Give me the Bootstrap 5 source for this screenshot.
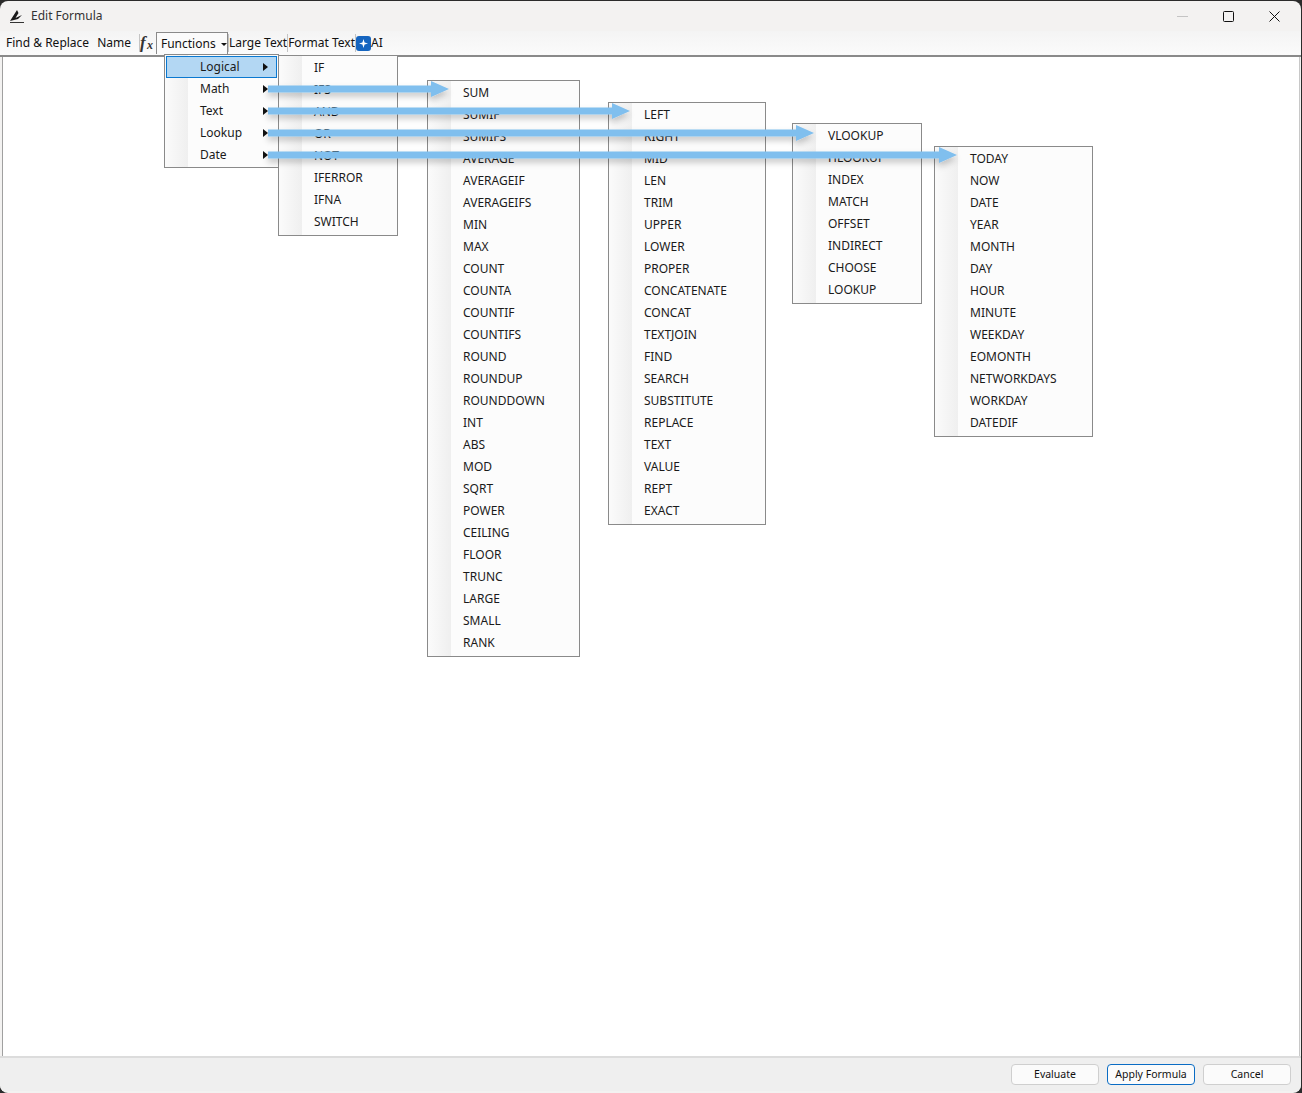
<!DOCTYPE html>
<html lang="en">
<head>
<meta charset="UTF-8">
<title>Edit Formula</title>
<link href="https://cdn.jsdelivr.net/npm/bootstrap@5.3.3/dist/css/bootstrap.min.css" rel="stylesheet">
<style>
  html, body { height: 100%; }
  body { background: #2b2b2b; font-family: "Noto Sans", "Open Sans", sans-serif; font-size: 12px; color: #111; overflow: hidden; }
  .app-window { position: relative; height: 1092px; margin: 1px 1px 0 0; background: #f3f2f1; border-radius: 8px 8px 8px 8px; overflow: hidden; }
  .title-bar { height: 30px; padding-left: 9px; }
  .title-text { margin-left: 6px; color: #333; font-size: 12px; }
  .win-btn { width: 46px; height: 30px; }
  .tool-bar { height: 26px; padding-left: 6px; background: linear-gradient(#f4f4f4, #fbfbfb); border-bottom: 2px solid #8a8a8a; }
  .tool-sep { width: 1px; height: 18px; background: #c4c4c4; }
  .fn-toggle { height: 22px; width: 72px; padding-left: 4px; border: 1px solid #8a8a8a; border-bottom: 0; background: #fbfbfb; margin-top: 0; }
  .caret-down { width: 0; height: 0; border: 3px solid transparent; border-top: 3px solid #111; border-bottom: 0; margin-left: 5px; margin-top: 1px; }
  .ai-badge { width: 15px; height: 15px; border-radius: 3px; background: #1565c0; }
  .editor-pane { height: 999px; margin-left: 2px; margin-right: 1px; background: #fff; border-left: 1px solid #a0a0a0; border-right: 1px solid #c8c8c8; }
  .foot-bar { height: 35px; padding-right: 10px; gap: 8px; background: #efefef; border-top: 2px solid #dcdcdc; }
  .foot-btn { width: 88px; height: 21px; padding: 0; font-size: 10.5px; line-height: 19px; color: #111; background: #fbfbfb; border: 1px solid #cfcfcf; border-radius: 4px; }
  .foot-btn.is-default { border-color: #0a6cc4; }

  .fly-menu { position: absolute; background: #fcfcfc; border: 1px solid #8a8a8a; padding-top: 1px; }
  .fly-menu::before { content: ""; position: absolute; top: 0; bottom: 0; left: 0; width: 23px; background: linear-gradient(90deg, #fbfbfb, #efefef); }
  .fly-row { position: relative; height: 22px; line-height: 22px; white-space: nowrap; color: #1a1a1a; }
  #menuRoot { left: 164px; top: 53px; width: 115px; height: 114px; padding: 1px; }
  #menuRoot .fly-row { padding-left: 34px; }
  #menuRoot .fly-row.is-active { background: #b3d7f3; outline: 1px solid #0a78d0; outline-offset: -1px; }
  .fly-arrow { position: absolute; right: 9px; top: 7px; width: 0; height: 0; border: 4px solid transparent; border-left: 5px solid #111; border-right: 0; }
  #menuLogical { left: 278px; top: 54px; width: 120px; height: 181px; }
  #menuMath { left: 427px; top: 79px; width: 153px; height: 577px; }
  #menuText { left: 608px; top: 101px; width: 158px; height: 423px; }
  #menuLookup { left: 792px; top: 122px; width: 130px; height: 181px; }
  #menuDate { left: 934px; top: 145px; width: 159px; height: 291px; }
  .sub-menu .fly-row { padding-left: 35px; }
  .arrow-layer { position: absolute; left: 0; top: 0; width: 1302px; height: 300px; pointer-events: none; }
</style>
</head>
<body>

<div class="app-window">
  <div class="title-bar d-flex align-items-center">
    <svg width="16" height="16" viewBox="0 0 16 16"><path d="M1 13 L8 2 L9.500 5 L6.500 10 L13 7 L9 11 L5 12 Z" fill="#1a1a1a"/><path d="M1 14.500 H15" stroke="#333" stroke-width="1"/></svg>
    <span class="title-text">Edit Formula</span>
    <div class="ms-auto d-flex me-1">
      <div class="win-btn d-flex align-items-center justify-content-center"><svg width="11" height="11"><path d="M0 5.500 H11" stroke="#c4c4c4"/></svg></div>
      <div class="win-btn d-flex align-items-center justify-content-center"><svg width="11" height="11"><rect x=".5" y=".5" width="10" height="10" rx="1" fill="none" stroke="#111"/></svg></div>
      <div class="win-btn d-flex align-items-center justify-content-center"><svg width="11" height="11"><path d="M.5 .5 L10.500 10.500 M10.500 .5 L.5 10.500" stroke="#111"/></svg></div>
    </div>
  </div>

  <div class="tool-bar d-flex align-items-center">
    <span>Find &amp; Replace</span>
    <span class="ms-2">Name</span>
    <span class="tool-sep ms-2"></span>
    <svg class="fx-icon" width="16" height="18" viewBox="0 0 16 18"><text x="0" y="14" font-family="Liberation Serif" font-style="italic" font-weight="700" font-size="17" fill="#333">f</text><text x="7" y="15" font-family="Liberation Serif" font-style="italic" font-weight="700" font-size="12" fill="#333">x</text></svg>
    <div class="fn-toggle d-flex align-items-center"><span>Functions</span><span class="caret-down"></span></div>
    <span class="tool-sep"></span>
    <span>Large Text</span>
    <span class="tool-sep"></span>
    <span>Format Text</span>
    <span class="tool-sep"></span>
    <span class="ai-badge d-flex align-items-center justify-content-center"><svg width="9" height="9" viewBox="0 0 10 10"><path d="M5 0 L6.200 3.800 L10 5 L6.200 6.200 L5 10 L3.800 6.200 L0 5 L3.800 3.800 Z" fill="#fff"/></svg></span>
    <span class="ai-label">AI</span>
  </div>

  <div class="editor-pane"></div>

  <div class="foot-bar d-flex align-items-center justify-content-end">
    <button class="foot-btn">Evaluate</button>
    <button class="foot-btn is-default">Apply Formula</button>
    <button class="foot-btn">Cancel</button>
  </div>

  <div id="menus"></div>

  <svg class="arrow-layer" viewBox="0 0 1302 300">
    <defs>
      <filter id="arrowShadow" x="-5%" y="-100%" width="110%" height="400%"><feDropShadow dx="0" dy="4" stdDeviation="3" flood-color="#000" flood-opacity=".22"/></filter>
    </defs>
    <g id="arrows" fill="#80bfee" filter="url(#arrowShadow)"></g>
  </svg>
</div>

<script>
  const menuData = {
    menuLogical: ['IF','IFS','AND','OR','NOT','IFERROR','IFNA','SWITCH'],
    menuMath: ['SUM','SUMIF','SUMIFS','AVERAGE','AVERAGEIF','AVERAGEIFS','MIN','MAX','COUNT','COUNTA','COUNTIF','COUNTIFS','ROUND','ROUNDUP','ROUNDDOWN','INT','ABS','MOD','SQRT','POWER','CEILING','FLOOR','TRUNC','LARGE','SMALL','RANK'],
    menuText: ['LEFT','RIGHT','MID','LEN','TRIM','UPPER','LOWER','PROPER','CONCATENATE','CONCAT','TEXTJOIN','FIND','SEARCH','SUBSTITUTE','REPLACE','TEXT','VALUE','REPT','EXACT'],
    menuLookup: ['VLOOKUP','HLOOKUP','INDEX','MATCH','OFFSET','INDIRECT','CHOOSE','LOOKUP'],
    menuDate: ['TODAY','NOW','DATE','YEAR','MONTH','DAY','HOUR','MINUTE','WEEKDAY','EOMONTH','NETWORKDAYS','WORKDAY','DATEDIF']
  };
  const menus = document.getElementById('menus');

  function addMenu(id, items, cls) {
    const menu = document.createElement('div');
    menu.id = id;
    menu.className = 'fly-menu ' + cls;
    items.forEach((name, i) => {
      const row = document.createElement('div');
      row.className = 'fly-row';
      row.innerText = name;
      if (cls === 'root-menu') {
        const tri = document.createElement('span');
        tri.className = 'fly-arrow';
        row.appendChild(tri);
        if (i === 0) row.classList.add('is-active');
      }
      menu.appendChild(row);
    });
    menus.appendChild(menu);
  }

  addMenu('menuRoot', ['Logical','Math','Text','Lookup','Date'], 'root-menu');
  Object.keys(menuData).forEach(id => addMenu(id, menuData[id], 'sub-menu'));

  // arrows from the root menu to each submenu
  const arrows = document.getElementById('arrows');
  [[88, 449], [110, 630], [132, 814], [154, 957]].forEach(([y, tip]) => {
    const p = document.createElementNS('http://www.w3.org/2000/svg', 'path');
    p.setAttribute('d', `M268 ${y-3.5} H${tip-18} V${y-8} L${tip} ${y} L${tip-18} ${y+8} V${y+3.5} H268 Z`);
    arrows.appendChild(p);
  });
</script>
<script src="https://cdn.jsdelivr.net/npm/bootstrap@5.3.3/dist/js/bootstrap.bundle.min.js"></script>
</body>
</html>
